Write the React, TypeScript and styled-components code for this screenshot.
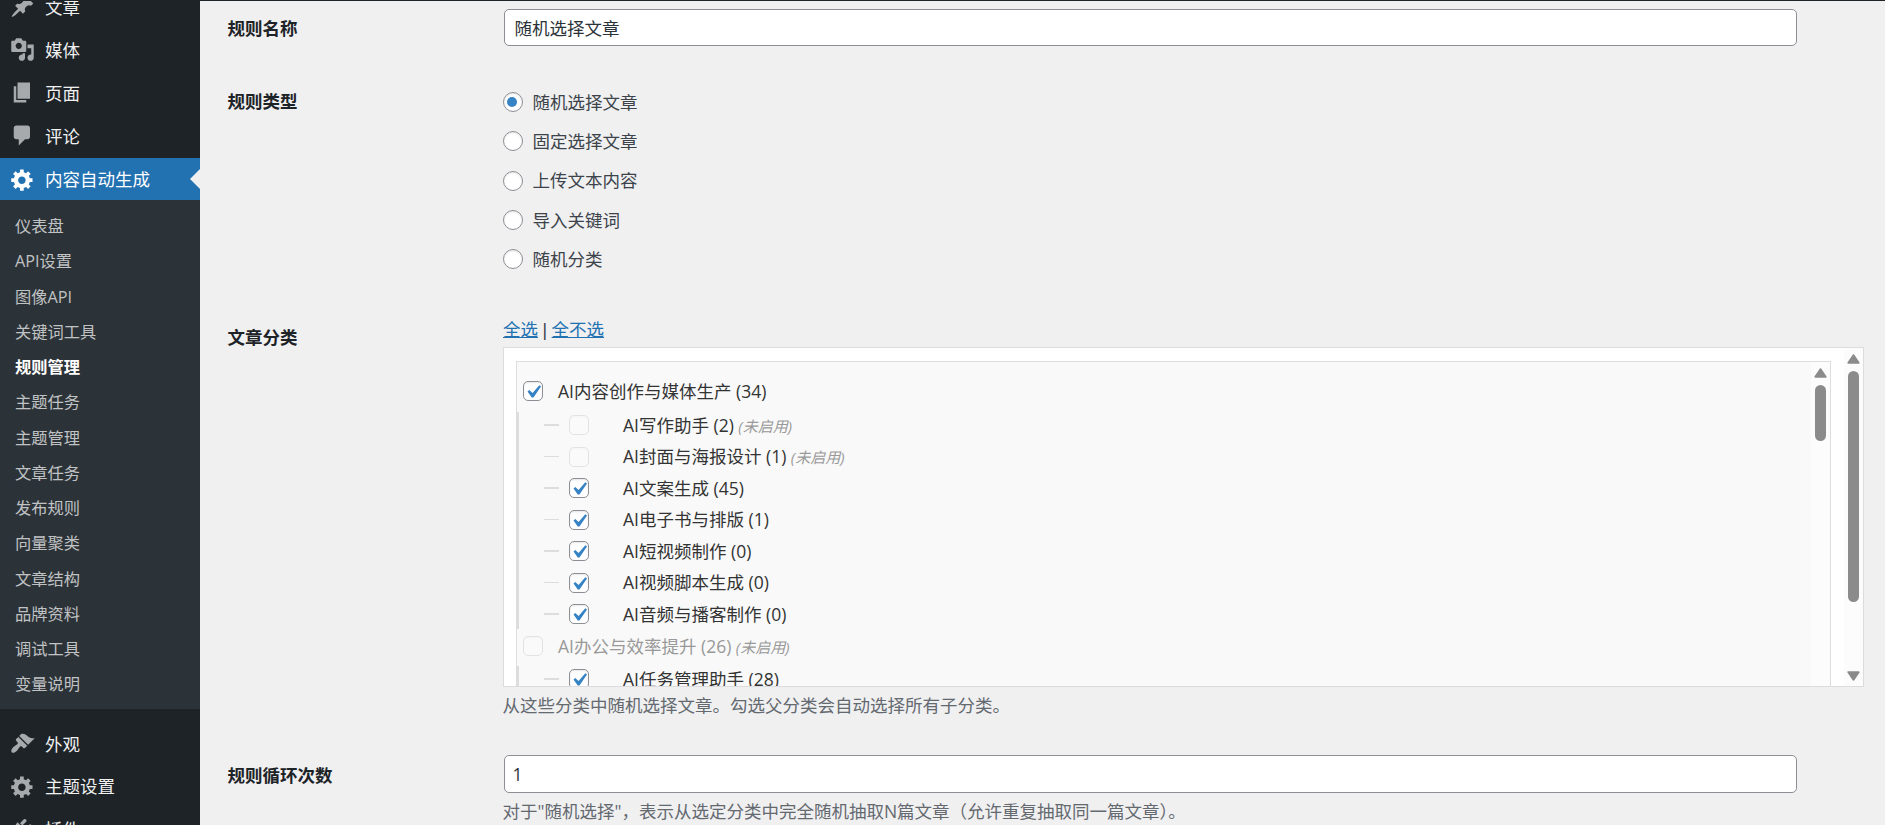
import { useState } from 'react';
import styled, { createGlobalStyle } from 'styled-components';

const GlobalStyle = createGlobalStyle`
  * {
    box-sizing: border-box;
  }
  html, body {
    margin: 0;
    height: 825px;
    overflow: hidden;
    background: #f0f0f1;
  }
  body, input {
    font-family: 'Open Sans', 'Noto Sans CJK SC', sans-serif;
    font-size: 17.5px;
  }
  ul, p {
    margin: 0;
    padding: 0;
    list-style: none;
  }
`;

const ICONS = {
  post: 'M10.44 3.02l1.82-1.82 6.36 6.35-1.83 1.82c-1.05-.68-2.48-.57-3.41.36l-.75.75c-.92.93-1.04 2.35-.35 3.41l-1.83 1.82-2.41-2.41-2.8 2.79c-.42.42-3.38 2.71-3.8 2.29s1.86-3.39 2.28-3.81l2.79-2.79L4.1 9.36l1.83-1.82c1.05.69 2.48.57 3.4-.36l.75-.75c.93-.92 1.05-2.35.36-3.41z',
  media:
    'M13 11V4c0-.55-.45-1-1-1h-1.67L9 1H5L3.67 3H2c-.55 0-1 .45-1 1v7c0 .55.45 1 1 1h10c.55 0 1-.45 1-1zM7 4.5c1.38 0 2.5 1.12 2.5 2.5S8.38 9.5 7 9.5 4.5 8.38 4.5 7 5.62 4.5 7 4.5zM14 6h5v10.5c0 1.38-1.12 2.5-2.5 2.5S14 17.88 14 16.5s1.12-2.5 2.5-2.5c.17 0 .34.02.5.05V9h-3V6zm-4 8.05V13h2v3.5c0 1.38-1.12 2.5-2.5 2.5S7 17.88 7 16.5 8.12 14 9.5 14c.17 0 .34.02.5.05z',
  page: 'M6 15V2h10v13H6zm-1 1h8v2H3V5h2v11z',
  comments: 'M5 2h9c1.1 0 2 .9 2 2v7c0 1.1-.9 2-2 2h-2l-5 5v-5H5c-1.1 0-2-.9-2-2V4c0-1.1.9-2 2-2z',
  generic:
    'M18 12h-2.18c-.17.7-.44 1.35-.81 1.93l1.54 1.54-2.1 2.1-1.54-1.54c-.58.36-1.23.63-1.91.79V19H8v-2.18c-.68-.16-1.33-.43-1.91-.79l-1.54 1.54-2.12-2.12 1.54-1.54c-.36-.58-.63-1.23-.79-1.91H1V9.03h2.17c.16-.7.44-1.35.8-1.94L2.43 5.55l2.1-2.1 1.54 1.54c.58-.37 1.24-.64 1.93-.81V2h3v2.18c.68.16 1.33.43 1.91.79l1.54-1.54 2.12 2.12-1.54 1.54c.36.59.64 1.24.8 1.94H18V12zm-8.5 1.5c1.66 0 3-1.34 3-3s-1.34-3-3-3-3 1.34-3 3 1.34 3 3 3z',
  appearance:
    'M14.48 11.06L7.41 3.99l1.5-1.5c.5-.56 2.3-.47 3.51.32 1.21.8 1.43 1.28 2.91 2.1 1.18.64 2.45 1.26 4.45.85zm-.71.71L6.7 4.7 4.93 6.47c-.39.39-.39 1.02 0 1.41l1.06 1.06c.39.39.39 1.03 0 1.42-.6.6-1.43 1.11-2.21 1.69-.35.26-.7.53-1.01.84C1.43 14.23.4 16.08 1.4 17.07c.99 1 2.84-.03 4.18-1.36.31-.31.58-.66.85-1.02.57-.78 1.08-1.61 1.69-2.21.39-.39 1.02-.39 1.41 0l1.06 1.06c.39.39 1.02.39 1.41 0z',
  plugins:
    'M13.11 4.36L9.87 7.6 8 5.73l3.24-3.24c.35-.34 1.05-.2 1.56.32.52.51.66 1.21.31 1.55zm-8 1.77l.91-1.12 9.01 9.01-1.19.84c-.71.71-2.63 1.16-3.82 1.16H6.14L4.9 17.26c-.59.59-1.54.59-2.12 0-.59-.58-.59-1.53 0-2.12l1.24-1.24v-3.88c0-1.13.4-3.19 1.09-3.89zm7.26 3.97l3.24-3.24c.34-.35 1.04-.21 1.55.31.52.51.66 1.21.31 1.55l-3.24 3.25z',
};

type IconName = keyof typeof ICONS;
type Menu = { icon: IconName; label: string };

const TOP_MENUS: Menu[] = [
  { icon: 'post', label: '文章' },
  { icon: 'media', label: '媒体' },
  { icon: 'page', label: '页面' },
  { icon: 'comments', label: '评论' },
];

const SUB_MENUS = [
  '仪表盘',
  'API设置',
  '图像API',
  '关键词工具',
  '规则管理',
  '主题任务',
  '主题管理',
  '文章任务',
  '发布规则',
  '向量聚类',
  '文章结构',
  '品牌资料',
  '调试工具',
  '变量说明',
];

const BOTTOM_MENUS: Menu[] = [
  { icon: 'appearance', label: '外观' },
  { icon: 'generic', label: '主题设置' },
  { icon: 'plugins', label: '插件' },
];

const RULE_TYPES = ['随机选择文章', '固定选择文章', '上传文本内容', '导入关键词', '随机分类'];

type Category = { name: string; count: number; disabled?: boolean };

const CATEGORIES: (Category & { children: Category[] })[] = [
  {
    name: 'AI内容创作与媒体生产',
    count: 34,
    children: [
      { name: 'AI写作助手', count: 2, disabled: true },
      { name: 'AI封面与海报设计', count: 1, disabled: true },
      { name: 'AI文案生成', count: 45 },
      { name: 'AI电子书与排版', count: 1 },
      { name: 'AI短视频制作', count: 0 },
      { name: 'AI视频脚本生成', count: 0 },
      { name: 'AI音频与播客制作', count: 0 },
    ],
  },
  {
    name: 'AI办公与效率提升',
    count: 26,
    disabled: true,
    children: [{ name: 'AI任务管理助手', count: 28 }],
  },
];

const MenuLink = ({ icon, label, active }: Menu & { active?: boolean }) => (
  <MenuItem $active={active}>
    <MenuIcon viewBox="0 0 20 20" $active={active}>
      <path d={ICONS[icon]} />
    </MenuIcon>
    {label}
  </MenuItem>
);

const Check = ({ checked, disabled }: { checked: boolean; disabled?: boolean }) => (
  <CheckBox $disabled={disabled}>
    {checked && (
      <svg viewBox="0 0 20 20">
        <path d="M14.83 4.89l1.34.94-5.81 8.38H9.02L5.78 9.67l1.34-1.25 2.57 2.4z" fill="#3582c4" />
      </svg>
    )}
  </CheckBox>
);

const Arrow = ({ down }: { down?: boolean }) => (
  <ArrowIcon viewBox="0 0 13 10" $down={down}>
    <path d="M6.5 1.2L11.6 8.8H1.4z" />
  </ArrowIcon>
);

const App = () => {
  const [type, setType] = useState(RULE_TYPES[0]);

  return (
    <>
      <GlobalStyle />
      <TopBar />
      <Page>
        <Sidebar>
          <MenuList>
            {TOP_MENUS.map((menu) => (
              <MenuLink key={menu.label} {...menu} />
            ))}
            <MenuLink icon="generic" label="内容自动生成" active />
          </MenuList>
          <SubMenu>
            {SUB_MENUS.map((label) => (
              <SubMenuItem key={label} $current={label === '规则管理'}>
                {label}
              </SubMenuItem>
            ))}
          </SubMenu>
          <MenuList>
            {BOTTOM_MENUS.map((menu) => (
              <MenuLink key={menu.label} {...menu} />
            ))}
          </MenuList>
        </Sidebar>
        <Form>
          <FormRow $height={82}>
            <RowTitle $top={7}>规则名称</RowTitle>
            <Field $top={8}>
              <TextInput $height={37} $indent={9.5} defaultValue="随机选择文章" />
            </Field>
          </FormRow>
          <FormRow $height={228}>
            <RowTitle $top={-2}>规则类型</RowTitle>
            <Field $top={-0.5}>
              {RULE_TYPES.map((label) => (
                <RadioLabel key={label} onClick={() => setType(label)}>
                  <Radio $checked={label === type} />
                  <LabelText>{label}</LabelText>
                </RadioLabel>
              ))}
            </Field>
          </FormRow>
          <FormRow $height={437}>
            <RowTitle $top={6}>文章分类</RowTitle>
            <Field $top={0}>
              <Links>
                <a>全选</a>
                <Divider>|</Divider>
                <a>全不选</a>
              </Links>
              <OuterBox>
                <InnerBox>
                  <Tree>
                    {CATEGORIES.map((parent, index) => (
                      <li key={parent.name}>
                        <ParentRow $first={index === 0} $disabled={parent.disabled}>
                          <Check checked={!parent.disabled} disabled={parent.disabled} />
                          <CategoryName>
                            {parent.name} ({parent.count})
                          </CategoryName>
                          {parent.disabled && <Note>(未启用)</Note>}
                        </ParentRow>
                        <Children>
                          {parent.children.map((child) => (
                            <ChildRow key={child.name}>
                              <Dash />
                              <Check checked={!child.disabled} disabled={child.disabled} />
                              <CategoryName>
                                {child.name} ({child.count})
                              </CategoryName>
                              {child.disabled && <Note>(未启用)</Note>}
                            </ChildRow>
                          ))}
                        </Children>
                      </li>
                    ))}
                  </Tree>
                  <ScrollTrack>
                    <Arrow />
                    <Thumb $height={56} />
                  </ScrollTrack>
                </InnerBox>
                <ScrollTrack>
                  <Arrow />
                  <Thumb $height={231} />
                  <Arrow down />
                </ScrollTrack>
              </OuterBox>
              <Description>从这些分类中随机选择文章。勾选父分类会自动选择所有子分类。</Description>
            </Field>
          </FormRow>
          <FormRow $height={90}>
            <RowTitle $top={7}>规则循环次数</RowTitle>
            <Field $top={7}>
              <TextInput $height={38} $indent={7.5} defaultValue="1" />
              <Description>对于"随机选择"，表示从选定分类中完全随机抽取N篇文章（允许重复抽取同一篇文章）。</Description>
            </Field>
          </FormRow>
        </Form>
      </Page>
    </>
  );
};

export default App;

const TopBar = styled.div`
  height: 1px;
  background: #1d2327;
`;
const Page = styled.div`
  display: flex;
  height: 824px;
  overflow: hidden;
  color: #3c434a;
`;
const Sidebar = styled.nav`
  flex: none;
  width: 200px;
  background: #1d2327;
`;
const MenuItem = styled.li<{ $active?: boolean }>`
  position: relative;
  display: flex;
  align-items: center;
  height: 42.5px;
  padding-left: 10px;
  color: ${({ $active }) => ($active ? '#fff' : '#f0f0f1')};
  background: ${({ $active }) => ($active ? '#2271b1' : 'transparent')};
  line-height: 24px;

  &::after {
    content: '';
    display: ${({ $active }) => ($active ? 'block' : 'none')};
    position: absolute;
    right: 0;
    top: 11px;
    border: 10px solid transparent;
    border-left: 0;
    border-right-color: #f0f0f1;
  }
`;
const MenuList = styled.ul`
  &:first-child {
    margin-top: -15px;

    ${MenuItem} {
      height: 43px;
      padding-bottom: 1.5px;
    }
    ${MenuItem}:last-child {
      height: 42px;
      padding-bottom: 0;
    }
  }
  &:last-child {
    padding-top: 13.5px;
  }
`;
const MenuIcon = styled.svg<{ $active?: boolean }>`
  width: 25px;
  height: 25px;
  margin-right: 10px;
  fill: ${({ $active }) => ($active ? '#fff' : '#a7aaad')};
`;
const SubMenu = styled.ul`
  height: 509px;
  padding: 9px 0 7px;
  background: #2c3338;
`;
const SubMenuItem = styled.li<{ $current: boolean }>`
  height: 35.25px;
  padding-left: 15px;
  line-height: 35.25px;
  font-size: 16.25px;
  font-weight: ${({ $current }) => ($current ? 600 : 400)};
  color: ${({ $current }) => ($current ? '#fff' : '#c0c2c4')};
`;
const Form = styled.main`
  flex: 1;
  padding-left: 27.5px;
`;
const FormRow = styled.section<{ $height: number }>`
  display: flex;
  height: ${({ $height }) => $height}px;
`;
const RowTitle = styled.div<{ $top: number }>`
  width: 275.5px;
  margin-top: ${({ $top }) => $top + 8}px;
  line-height: 24px;
  font-weight: 600;
  color: #1d2327;
`;
const Field = styled.div<{ $top: number }>`
  width: 1361px;
  margin-top: ${({ $top }) => $top}px;
`;
const TextInput = styled.input<{ $height: number; $indent: number }>`
  display: block;
  width: 1293px;
  height: ${({ $height }) => $height}px;
  margin-left: 1px;
  padding: 0 ${({ $indent }) => $indent}px;
  border: 1px solid #8c8f94;
  border-radius: 5px;
  background: #fff;
  color: #2c3338;
  outline: none;
`;
const RadioLabel = styled.label`
  display: flex;
  align-items: center;
  gap: 9.5px;
  height: 39.25px;
`;
const LabelText = styled.span`
  line-height: 24px;
  padding-bottom: 0.5px;
`;
const Radio = styled.span<{ $checked: boolean }>`
  display: flex;
  align-items: center;
  width: 20px;
  height: 20px;
  padding-left: 3px;
  border: 1px solid #8c8f94;
  border-radius: 50%;
  background: #fff;
  box-shadow: inset 0 1px 2px rgba(0, 0, 0, 0.1);

  &::before {
    content: '';
    width: 10px;
    height: 10px;
    border-radius: 50%;
    background: ${({ $checked }) => ($checked ? '#3582c4' : 'transparent')};
  }
`;
const Links = styled.div`
  height: 36px;
  padding-top: 6px;
  line-height: 24px;

  a {
    color: #2271b1;
    text-decoration: underline;
  }
`;
const Divider = styled.span`
  margin: 0 4.5px;
  font-family: 'Liberation Sans', sans-serif;
`;
const OuterBox = styled.div`
  display: flex;
  justify-content: space-between;
  height: 340px;
  padding-left: 12px;
  border: 1px solid #dcdcde;
  background: #fff;
  overflow: hidden;
`;
const InnerBox = styled.div`
  display: flex;
  width: 1315px;
  height: 375px;
  margin-top: 13px;
  border: 1px solid #ddd;
  background: #f9f9f9;
`;
const Tree = styled.ul`
  flex: 1;
  margin-left: -1px;
  color: #333;
`;
const CheckBox = styled.span<{ $disabled?: boolean }>`
  flex: none;
  width: 20px;
  height: 20px;
  border: 1px solid #8c8f94;
  border-radius: 5px;
  background: #fff;
  box-shadow: inset 0 1px 2px rgba(0, 0, 0, 0.1);
  opacity: ${({ $disabled }) => ($disabled ? 0.2 : 1)};

  svg {
    display: block;
    width: 26px;
    height: 26px;
    margin: -3px 0 0 -4.5px;
  }
`;
const CategoryName = styled.span`
  line-height: 24px;
  padding-bottom: 0.5px;
`;
const ParentRow = styled.div<{ $first: boolean; $disabled?: boolean }>`
  display: flex;
  align-items: center;
  height: ${({ $first }) => ($first ? 50 : 37)}px;
  padding: ${({ $first }) => ($first ? '16px 0 8px 7px' : '4px 0 7px 7px')};
  color: ${({ $disabled }) => ($disabled ? '#999' : 'inherit')};

  ${CheckBox} {
    margin-right: 15px;
  }
`;
const Children = styled.ul`
  display: flex;
  flex-direction: column;
  gap: 5.5px;
  padding-bottom: 2px;
  border-left: 3px solid #ddd;
`;
const ChildRow = styled.li`
  display: flex;
  align-items: center;
  height: 26px;
  padding-left: 25px;

  ${CheckBox} {
    margin-right: 34px;
  }
`;
const Dash = styled.span`
  width: 15px;
  height: 1.25px;
  margin-right: 10px;
  background: #ddd;
`;
const Note = styled.em`
  margin-left: 4.5px;
  font-size: 15px;
  color: #999;
`;
const ScrollTrack = styled.div`
  display: flex;
  flex-direction: column;
  align-items: center;
  flex: none;
  width: 19px;
  padding-top: 6px;
  background: #fcfcfc;
`;
const ArrowIcon = styled.svg<{ $down?: boolean }>`
  width: 13px;
  height: 10px;
  fill: #8b8b8b;
  stroke: #8b8b8b;
  stroke-width: 2;
  stroke-linejoin: round;
  margin-top: ${({ $down }) => ($down ? 'auto' : 0)};
  margin-bottom: ${({ $down }) => ($down ? '5px' : '7px')};
  transform: ${({ $down }) => ($down ? 'rotate(180deg)' : 'none')};
`;
const Thumb = styled.div<{ $height: number }>`
  width: 11px;
  height: ${({ $height }) => $height}px;
  border-radius: 6px;
  background: #8b8b8b;
`;
const Description = styled.p`
  margin: 5px 0 0 -0.5px;
  line-height: 26px;
  color: #646970;
`;
